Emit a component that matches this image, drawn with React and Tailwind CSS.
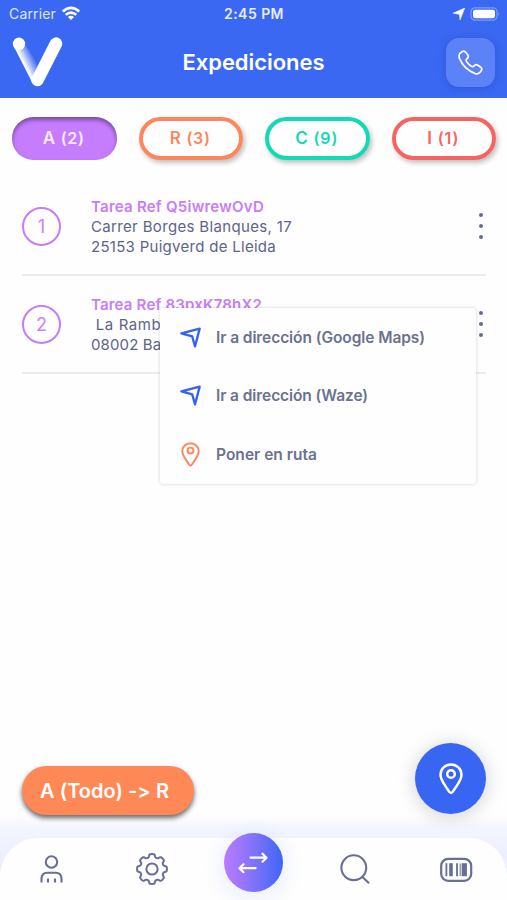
import React from "react";

// Spreads a line of text to a given width through letter spacing.
function T({ children, w, className = "" }) {
  const ref = React.useRef(null);
  React.useLayoutEffect(() => {
    const el = ref.current;
    el.style.letterSpacing = "0px";
    const n = el.textContent.length;
    el.style.letterSpacing = (w - el.getBoundingClientRect().width) / n + "px";
  }, [w]);
  return (
    <span ref={ref} className={"inline-block whitespace-pre [font-feature-settings:'calt'_0] " + className}>
      {children}
    </span>
  );
}

function Pin({ className, width }) {
  return (
    <svg viewBox="0 0 24 32" className={className} fill="none" stroke="currentColor" strokeWidth={width} strokeLinejoin="round">
      <path d="M12 30C10.6 30 9.9 28.4 8.7 26.5C5.5 21.4 1.5 17.2 1.5 11.8C1.5 6 6.2 1.5 12 1.5S22.5 6 22.5 11.8C22.5 17.2 18.5 21.4 15.3 26.5C14.1 28.4 13.4 30 12 30Z" />
      <circle cx="12" cy="11" r="3.8" />
    </svg>
  );
}

function Nav() {
  return (
    <svg viewBox="0 0 22 22" className="h-[22px] w-[22px] shrink-0 text-[#3563f0]" fill="none" stroke="currentColor" strokeWidth="2.3" strokeLinejoin="round">
      <path d="M1.4 6.3L19.7 1.6L15 19.4L12.2 9.4Z" />
    </svg>
  );
}

function Dots() {
  return (
    <div className="flex w-[5px] flex-col items-center gap-[7px]">
      <i className="h-1 w-1 rounded-full bg-[#656c92]" />
      <i className="h-1 w-1 rounded-full bg-[#656c92]" />
      <i className="h-1 w-1 rounded-full bg-[#656c92]" />
    </div>
  );
}

function Task({ n, title, titleW, a, aW, b, bW }) {
  return (
    <div className="flex h-[98px] items-start border-b-2 border-[#ececee] pt-[19px]">
      <div className="mt-[10px] flex h-[39px] w-[39px] items-center justify-center rounded-full border-2 border-[#c67dfa] text-[18px] text-[#c983fa]">{n}</div>
      <div className="ml-[30px] flex flex-1 flex-col items-start text-[15px] leading-5 text-[#5d648b]">
        <T w={titleW} className="font-semibold text-[#c67dfa]">{title}</T>
        <T w={aW}>{a}</T>
        <T w={bW}>{b}</T>
      </div>
      <div className="mr-[3px] mt-[16px]"><Dots /></div>
    </div>
  );
}

function Filter({ letter, count, w, className }) {
  return (
    <div className={"flex h-[43px] items-center justify-center rounded-full pr-[1px] " + className}>
      <T w={w}>
        <span className="text-[17px]">{letter}</span>
        <span className="text-[16px]"> {count}</span>
      </T>
    </div>
  );
}

// Outline of the eight-toothed gear.
const gear = (() => {
  let d = "";
  for (let i = 0; i <= 160; i++) {
    const t = (i / 160) * Math.PI * 2;
    const r = 13.4 + 1.5 * Math.tanh(2.4 * Math.cos(8 * t) + 0.5);
    d += (i ? "L" : "M") + (16 + r * Math.cos(t)).toFixed(2) + " " + (16 + r * Math.sin(t)).toFixed(2);
  }
  return d + "Z";
})();

export default function App() {
  return (
    <div className="relative flex h-[900px] w-[507px] flex-col overflow-hidden bg-[#fefefe] font-['Inter','Liberation_Sans',sans-serif]">
      <header className="h-[98px] shrink-0 bg-[#3b68f3] text-white">
        <div className="grid h-[28px] grid-cols-3 items-center pl-[9px] pr-[6px] text-[14px] leading-7">
          <div className="flex items-center gap-[6px]">
            <T w={47} className="text-[#dfe6ff]">Carrier</T>
            <svg viewBox="0 0 18 14" className="-mt-[2px] h-[14px] w-[18px]" fill="none" stroke="white" strokeWidth="2.6">
              <path d="M.8 5.4Q9-1.8 17.2 5.4M3.7 8.8Q9 4.3 14.3 8.8" />
              <path d="M5.9 10.9Q9 8.4 12.1 10.9L9 14Z" fill="white" stroke="none" />
            </svg>
          </div>
          <div className="-ml-[2px] text-center"><T w={60} className="font-semibold text-[#e8edff]">2:45 PM</T></div>
          <div className="-mt-[1px] flex items-center justify-end gap-[5px]">
            <svg viewBox="0 0 12 12" className="h-3 w-3" fill="white"><path d="M0 5.2L11.8 0L7 12L6.3 6.2Z" stroke="white" strokeWidth=".5" /></svg>
            <svg viewBox="0 0 31 14" className="h-[14px] w-[31px]">
              <rect x="1" y=".8" width="26" height="12.4" rx="4" fill="none" stroke="#7f9bf9" strokeWidth="1.2" />
              <rect x="3" y="2.7" width="22" height="8.6" rx="2.3" fill="white" />
              <path d="M28.5 5V9Q30.2 7 28.5 5Z" fill="#91a9fb" />
            </svg>
          </div>
        </div>
        <div className="flex items-start justify-between pl-[12px] pr-[12px]">
          <svg viewBox="0 0 52 52" className="mt-[8px] h-[52px] w-[52px]" fill="none">
            <defs>
              <linearGradient id="stem" gradientUnits="userSpaceOnUse" x1="10" y1="27" x2="22" y2="21">
                <stop offset=".1" stopColor="white" />
                <stop offset="1" stopColor="white" stopOpacity="0" />
              </linearGradient>
            </defs>
            <path d="M1.6 10L20.5 47L27 41L30 34L12.7 8Z" fill="url(#stem)" />
            <circle cx="7" cy="7.8" r="6.2" fill="white" />
            <path d="M44 7.6L25.5 44" stroke="white" strokeWidth="12.5" strokeLinecap="round" />
          </svg>
          <h1 className="mt-[19px] -ml-[3px] text-[22px] font-semibold leading-[30px]"><T w={142}>Expediciones</T></h1>
          <button className="mt-[10px] flex h-[49px] w-[49px] items-center justify-center rounded-[13px] bg-[#5c82f7] shadow-[0_1px_7px_1px_rgba(30,55,155,0.3)]">
            <svg viewBox="0 0 26 26" className="h-[25px] w-[25px]" fill="none" stroke="white" strokeWidth="1.8" strokeLinejoin="round">
              <path d="M4.6 1.6Q6.5.5 8 2.4L10.2 5.3Q11.4 7.2 9.8 8.7L8.7 9.8Q8 10.8 9.2 12.4Q11 14.8 13.5 16.7Q15.2 17.8 16.2 17L17.3 16Q18.8 14.6 20.6 15.8L23.7 18Q25.4 19.4 24.3 21.2L22.9 23.2Q21.2 25.4 17.8 24.5Q6.5 20.5 1.5 8.8Q.3 5.4 2.2 3.4Z" />
            </svg>
          </button>
        </div>
      </header>

      <div className="mt-[19px] grid shrink-0 grid-cols-4 gap-[22px] pl-[12px] pr-[11px] font-semibold">
        <Filter letter="A" count="(2)" w={42} className="bg-[#c67dfd] text-[#fae8ff] shadow-[inset_0_3px_4px_rgba(70,40,110,0.6)]" />
        <Filter letter="R" count="(3)" w={41} className="border-4 border-[#fc875d] text-[#fc875d] shadow-[2px_3px_5px_rgba(0,0,0,0.25)]" />
        <Filter letter="C" count="(9)" w={43} className="border-4 border-[#13dab5] text-[#13dab5] shadow-[2px_3px_5px_rgba(0,0,0,0.25)]" />
        <Filter letter="I" count="(1)" w={32} className="border-4 border-[#f66462] text-[#f66462] shadow-[2px_3px_5px_rgba(0,0,0,0.25)]" />
      </div>

      <main className="mt-[18px] pl-[22px] pr-[21px]">
        <Task n="1" title="Tarea Ref Q5iwrewOvD" titleW={173} a="Carrer Borges Blanques, 17" aW={201} b="25153 Puigverd de Lleida" bW={185} />
        <Task n="2" title="Tarea Ref 83pxK78hX2" titleW={171} a=" La Rambla, 1" aW={100} b="08002 Barcelona" bW={124} />
      </main>

      <div className="absolute left-[160px] top-[308px] flex h-[176px] w-[316px] flex-col rounded-[4px] bg-[#fefefe] px-[20px] text-[15.5px] font-semibold text-[#6b718f] shadow-[0_0_3px_1px_rgba(0,0,0,0.1)]">
        <div className="flex h-[59px] items-center gap-[14px]"><Nav /><T w={209}>Ir a dirección (Google Maps)</T></div>
        <div className="flex h-[58px] items-center gap-[14px]"><Nav /><T w={152}>Ir a dirección (Waze)</T></div>
        <div className="flex h-[59px] items-center gap-[14px]"><div className="flex w-[22px] justify-center pr-[2px]"><Pin className="h-[25px] w-[19px] text-[#fc875d]" width="2.5" /></div><T w={101}>Poner en ruta</T></div>
      </div>

      <div className="absolute left-[22px] top-[766px] flex h-[49px] w-[172px] items-center rounded-full bg-[#fe8957] pl-[18px] text-[20px] font-semibold text-white shadow-[0_3px_5px_rgba(0,0,0,0.6)]"><T w={129}>{"A (Todo) -> R"}</T></div>

      <footer className="mt-auto h-[76px] shrink-0 bg-gradient-to-b from-[#f5f7fe] to-[#dfe5fe] pt-[14px] shadow-[0_0_10px_2px_#f3f5fe]">
        <nav className="grid h-full grid-cols-5 items-start rounded-t-[38px] bg-[#fefefe] text-[#686e95]">
          <div className="flex justify-center pt-[16px]">
            <svg viewBox="0 0 24 30" className="h-[30px] w-[24px]" fill="none" stroke="currentColor" strokeWidth="2.1"><circle cx="12.5" cy="8" r="5.7" /><path d="M2.5 28.5V25Q2.5 18.8 8.5 18.8H16.5Q22.5 18.8 22.5 25V28.5M9 24.5V28.5M16 24.5V28.5" /></svg>
          </div>
          <div className="flex justify-center pt-[15px]">
            <svg viewBox="0 0 32 32" className="h-8 w-8" fill="none" stroke="currentColor" strokeWidth="2" strokeLinejoin="round"><path d={gear} /><circle cx="16" cy="16" r="5.6" /></svg>
          </div>
          <div className="flex justify-center">
            <div className="-mt-[5px] flex h-[59px] w-[59px] shrink-0 items-center justify-center rounded-full bg-gradient-to-r from-[#bb7aff] to-[#3866f5] shadow-[0_4px_15px_7px_rgba(80,110,240,0.08)]">
              <svg viewBox="0 0 32 24" className="h-6 w-8" fill="none" stroke="white" strokeWidth="2.2" strokeLinecap="round" strokeLinejoin="round"><path d="M13.5 6.7H29.5M25.5 2.7L29.5 6.7L25.5 10.7M18.5 17.2H2.5M6.5 13.2L2.5 17.2L6.5 21.2" /></svg>
            </div>
          </div>
          <div className="flex justify-center pt-[16px]">
            <svg viewBox="0 0 30 30" className="h-[30px] w-[30px]" fill="none" stroke="currentColor" strokeWidth="2.1"><circle cx="13.8" cy="13.7" r="12.4" /><path d="M22 22.5L29 29.3" /></svg>
          </div>
          <div className="flex justify-center pt-[19px]">
            <svg viewBox="0 0 34 26" className="h-[26px] w-[34px]" fill="none" stroke="currentColor" strokeWidth="2.2"><rect x="2.2" y="1.8" width="30" height="22" rx="7" /><path d="M7.4 6.2V19.2" strokeWidth="1.8" /><path d="M12 6.2V19.2" strokeWidth="3.6" /><path d="M18 6.2V19.2" strokeWidth="1.8" /><path d="M21.2 6.5V19" strokeWidth="1" /><path d="M25.3 6.2V19.2" strokeWidth="5.2" /></svg>
          </div>
        </nav>
      </footer>

      <button className="absolute left-[415px] top-[743px] flex h-[71px] w-[71px] items-center justify-center rounded-full bg-[#3866f2] text-white shadow-[0_2px_18px_1px_rgba(0,0,0,0.17)]"><Pin className="h-[32px] w-[24px]" width="2.5" /></button>
    </div>
  );
}
